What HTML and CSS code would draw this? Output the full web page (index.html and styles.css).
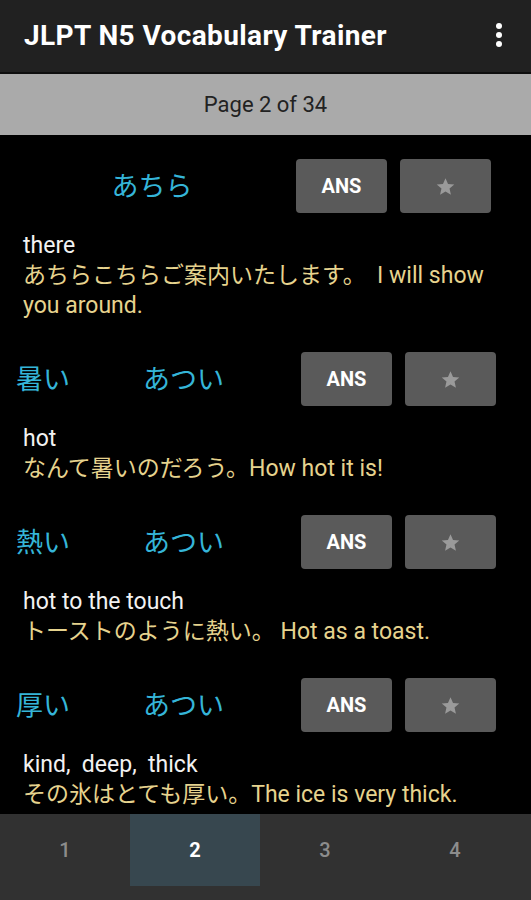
FILE: index.html
```html
<!DOCTYPE html>
<html lang="ja">
<head>
    <meta charset="UTF-8">
    <meta name="viewport" content="width=device-width, initial-scale=1.0">
    <title>JLPT N5 Vocabulary Trainer</title>
    <link rel="stylesheet" href="styles.css">
</head>
<body>

<div class="app">
    <header class="toolbar">
        <h1 class="title">JLPT N5 Vocabulary Trainer</h1>
        <button class="menu" aria-label="More options">
            <svg width="8" height="26" viewBox="0 0 8 26">
                <circle cx="4" cy="4" r="3" fill="#fff"/>
                <circle cx="4" cy="13" r="3" fill="#fff"/>
                <circle cx="4" cy="22" r="3" fill="#fff"/>
            </svg>
        </button>
    </header>

    <div class="pagebar">Page 2 of 34</div>

    <main class="list">
        <section class="entry entry-kana">
            <div class="head">
                <div class="word word-center">あちら</div>
                <div class="actions">
                    <button class="btn">ANS</button>
                    <button class="btn btn-star" aria-label="Star">
                        <svg width="21" height="21" viewBox="0 0 24 24"><path d="M12 2.5l2.9 6.6 7.1.6-5.4 4.7 1.6 7-6.2-3.7-6.2 3.7 1.6-7L2 9.7l7.1-.6z" fill="#9a9a9a"/></svg>
                    </button>
                </div>
            </div>
            <p class="meaning">there</p>
            <p class="example">あちらこちらご案内いたします。&nbsp; I will show you around.</p>
        </section>

        <section class="entry">
            <div class="head">
                <div class="word word-kanji">暑い</div>
                <div class="word">あつい</div>
                <div class="actions">
                    <button class="btn">ANS</button>
                    <button class="btn btn-star" aria-label="Star">
                        <svg width="21" height="21" viewBox="0 0 24 24"><path d="M12 2.5l2.9 6.6 7.1.6-5.4 4.7 1.6 7-6.2-3.7-6.2 3.7 1.6-7L2 9.7l7.1-.6z" fill="#9a9a9a"/></svg>
                    </button>
                </div>
            </div>
            <p class="meaning">hot</p>
            <p class="example">なんて暑いのだろう。How hot it is!</p>
        </section>

        <section class="entry">
            <div class="head">
                <div class="word word-kanji">熱い</div>
                <div class="word">あつい</div>
                <div class="actions">
                    <button class="btn">ANS</button>
                    <button class="btn btn-star" aria-label="Star">
                        <svg width="21" height="21" viewBox="0 0 24 24"><path d="M12 2.5l2.9 6.6 7.1.6-5.4 4.7 1.6 7-6.2-3.7-6.2 3.7 1.6-7L2 9.7l7.1-.6z" fill="#9a9a9a"/></svg>
                    </button>
                </div>
            </div>
            <p class="meaning">hot to the touch</p>
            <p class="example">トーストのように熱い。 Hot as a toast.</p>
        </section>

        <section class="entry">
            <div class="head">
                <div class="word word-kanji">厚い</div>
                <div class="word">あつい</div>
                <div class="actions">
                    <button class="btn">ANS</button>
                    <button class="btn btn-star" aria-label="Star">
                        <svg width="21" height="21" viewBox="0 0 24 24"><path d="M12 2.5l2.9 6.6 7.1.6-5.4 4.7 1.6 7-6.2-3.7-6.2 3.7 1.6-7L2 9.7l7.1-.6z" fill="#9a9a9a"/></svg>
                    </button>
                </div>
            </div>
            <p class="meaning">kind,&nbsp; deep,&nbsp; thick</p>
            <p class="example">その氷はとても厚い。The ice is very thick.</p>
        </section>
    </main>

    <nav class="tabs">
        <div class="tab">1</div>
        <div class="tab tab-active">2</div>
        <div class="tab">3</div>
        <div class="tab">4</div>
    </nav>
</div>

</body>
</html>
```

FILE: styles.css
```css
* {
    box-sizing: border-box;
}
body {
    margin: 0;
    background-color: #000;
    font-family: Roboto, "Noto Sans CJK JP", sans-serif;
}
.app {
    display: flex;
    flex-direction: column;
    height: 100vh;
    overflow: hidden;
}
.toolbar {
    display: flex;
    align-items: center;
    justify-content: space-between;
    height: 74px;
    padding: 0 28px 2px 24px;
    background-color: #212121;
    border-bottom: 2px solid #0e0e0e;
    flex-shrink: 0;
}
.title {
    margin: 0;
    color: #fff;
    font-size: 28px;
    font-weight: bold;
    letter-spacing: 0.4px;
}
.menu {
    display: flex;
    padding: 0;
    background: none;
    border: none;
}
.pagebar {
    display: flex;
    align-items: center;
    justify-content: center;
    height: 61px;
    background-color: #aaaaaa;
    color: #222;
    font-size: 22px;
    flex-shrink: 0;
}
.list {
    flex: 1;
    overflow: hidden;
    padding-top: 24px;
}
.entry {
    padding-bottom: 31px;
}
.head {
    display: flex;
    align-items: center;
    height: 54px;
    padding-right: 35px;
}
.entry-kana .head {
    padding-right: 40px;
}
.word {
    margin-top: -3px;
    color: #35b5d8;
    font-family: "Noto Sans CJK JP", sans-serif;
    font-size: 27px;
}
.word-center {
    flex: 1;
    padding-left: 8px;
    text-align: center;
}
.word-kanji {
    width: 143px;
    padding-left: 16px;
}
.actions {
    display: flex;
    gap: 13px;
    margin-left: auto;
}
.btn {
    display: flex;
    align-items: center;
    justify-content: center;
    width: 91px;
    height: 54px;
    padding: 0;
    background-color: #5a5a5a;
    color: #fff;
    border: none;
    border-radius: 4px;
    font-family: Roboto, sans-serif;
    font-size: 20px;
    font-weight: bold;
}
.meaning {
    margin: 18px 0 0;
    padding: 0 23px;
    color: #f2f2f2;
    font-size: 23px;
    line-height: 30px;
}
.example {
    margin: 0;
    padding: 0 23px;
    color: #e6d38e;
    font-size: 23px;
    line-height: 30px;
}
.tabs {
    display: flex;
    height: 86px;
    padding-bottom: 14px;
    background-color: #313131;
    flex-shrink: 0;
}
.tab {
    display: flex;
    align-items: center;
    justify-content: center;
    width: 130px;
    flex-shrink: 0;
    color: #8c8c8c;
    font-size: 20px;
    font-weight: 500;
}
.tab-active {
    background-color: #37474f;
    color: #fff;
    font-weight: bold;
}
```
